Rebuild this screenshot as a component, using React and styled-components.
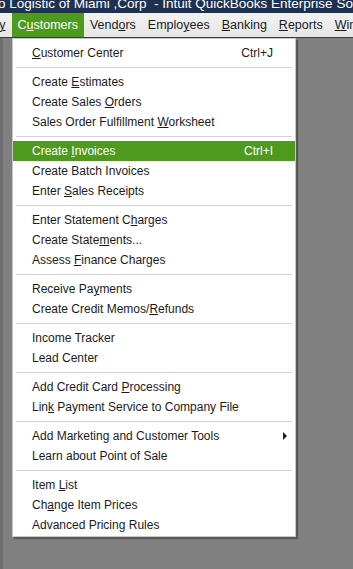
import React from 'react';
import styled, { createGlobalStyle } from 'styled-components';

const GlobalStyle = createGlobalStyle`
  html, body { margin: 0; padding: 0; }
  body {
    background: #808080;
    font-family: "Liberation Sans", Arial, sans-serif;
    overflow: hidden;
  }
`;

const Screen = styled.div`
  width: 353px;
  height: 569px;
  display: flex;
  flex-direction: column;
  background: #808080;
  overflow: hidden;
`;

const TitleBar = styled.div`
  height: 13px;
  background: #1e3150;
  color: #ffffff;
  font-size: 13.5px;
  line-height: 13px;
  white-space: nowrap;
  overflow: hidden;
  margin-left: -2px;
  & > span { position: relative; top: -3px; }
`;

const MenuBar = styled.div`
  height: 24px;
  display: flex;
  align-items: stretch;
  background: linear-gradient(#f2f2f2, #e6e6e6);
  border-bottom: 1px solid #3a3a3a;
  white-space: nowrap;
  overflow: hidden;
  font-size: 12.5px;
`;

const BarItem = styled.div`
  display: flex;
  align-items: center;
  padding: 0 6px;
  color: ${p => (p.$active ? '#ffffff' : '#1b1b1b')};
  background: ${p => (p.$active ? '#4e9a1d' : 'transparent')};
  flex-shrink: 0;
`;

const Desk = styled.div`
  flex: 1;
  display: flex;
  align-items: flex-start;
  padding-left: 9px;
  border-left: 3px solid #6e6e6e;
`;

const Dropdown = styled.div`
  width: 282px;
  background: #ffffff;
  border: 1px solid #c8c8c8;
  box-shadow: 2px 2px 1px rgba(0, 0, 0, 0.3);
  padding: 4px 0 1px;
  font-size: 12px;
  color: #1b1b1b;
`;

const Item = styled.div`
  height: 20px;
  display: flex;
  align-items: center;
  padding: 0 22px 0 19px;
  background: ${p => (p.$active ? '#4e9a1d' : 'transparent')};
  color: ${p => (p.$active ? '#ffffff' : '#1b1b1b')};
  position: relative;
`;

const Label = styled.span`
  flex: 1;
  white-space: nowrap;
`;

const Shortcut = styled.span`
  white-space: nowrap;
`;

const Arrow = styled.span`
  position: absolute;
  right: 8px;
  top: 6px;
  width: 0;
  height: 0;
  border-left: 4px solid #1b1b1b;
  border-top: 4px solid transparent;
  border-bottom: 4px solid transparent;
`;

const Separator = styled.div`
  height: 1px;
  margin: 4px 3px;
  background: #d2d2d2;
`;

function Mnemonic({ text }) {
  const i = text.indexOf('&');
  if (i < 0) return text;
  return (
    <>
      {text.slice(0, i)}
      <u>{text[i + 1]}</u>
      {text.slice(i + 2)}
    </>
  );
}

const groups = [
  [{ label: '&Customer Center', key: 'Ctrl+J' }],
  [
    { label: 'Create &Estimates' },
    { label: 'Create Sales &Orders' },
    { label: 'Sales Order Fulfillment &Worksheet' },
  ],
  [
    { label: 'Create &Invoices', key: 'Ctrl+I', active: true },
    { label: 'Create Batch Invoices' },
    { label: 'Enter &Sales Receipts' },
  ],
  [
    { label: 'Enter Statement C&harges' },
    { label: 'Create State&ments...' },
    { label: 'Assess &Finance Charges' },
  ],
  [
    { label: 'Receive Pa&yments' },
    { label: 'Create Credit Memos/&Refunds' },
  ],
  [{ label: 'Income Tracker' }, { label: 'Lead Center' }],
  [
    { label: 'Add Credit Card &Processing' },
    { label: 'Lin&k Payment Service to Company File' },
  ],
  [
    { label: 'Add Marketing and Customer Tools', sub: true },
    { label: 'Learn about Point of Sale' },
  ],
  [
    { label: 'Item &List' },
    { label: 'Ch&ange Item Prices' },
    { label: 'Advanced Pricing Rules' },
  ],
];

const bar = ['Compan&y', 'C&ustomers', 'Vend&ors', 'Emplo&yees', '&Banking', '&Reports', '&Window'];

export default function App() {
  return (
    <Screen>
      <GlobalStyle />
      <TitleBar>
        <span>o Logistic of Miami ,Corp&nbsp; - Intuit QuickBooks Enterprise Solutions</span>
      </TitleBar>
      <MenuBar>
        <BarItem style={{ marginLeft: -54 }}>
          <Mnemonic text={bar[0]} />
        </BarItem>
        {bar.slice(1).map((b, i) => (
          <BarItem key={b} $active={i === 0}>
            <Mnemonic text={b} />
          </BarItem>
        ))}
      </MenuBar>
      <Desk>
        <Dropdown>
          {groups.map((g, gi) => (
            <React.Fragment key={gi}>
              {gi > 0 && <Separator />}
              {g.map(it => (
                <Item key={it.label} $active={it.active}>
                  <Label>
                    <Mnemonic text={it.label} />
                  </Label>
                  {it.key && <Shortcut>{it.key}</Shortcut>}
                  {it.sub && <Arrow />}
                </Item>
              ))}
            </React.Fragment>
          ))}
        </Dropdown>
      </Desk>
    </Screen>
  );
}
